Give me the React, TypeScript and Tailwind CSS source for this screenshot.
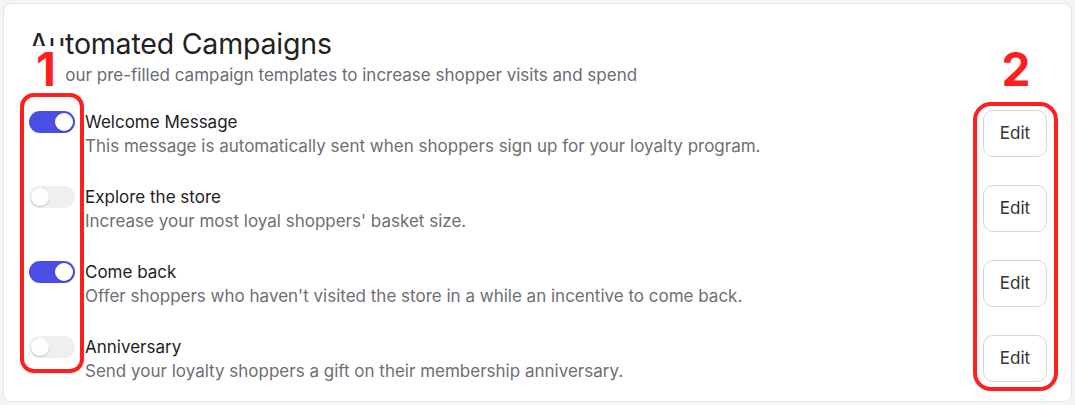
import React from "react";

type Campaign = { title: string; desc: string; on: boolean };

const campaigns: Campaign[] = [
    { title: "Welcome Message", desc: "This message is automatically sent when shoppers sign up for your loyalty program.", on: true },
    { title: "Explore the store", desc: "Increase your most loyal shoppers' basket size.", on: false },
    { title: "Come back", desc: "Offer shoppers who haven't visited the store in a while an incentive to come back.", on: true },
    { title: "Anniversary", desc: "Send your loyalty shoppers a gift on their membership anniversary.", on: false },
];

function Toggle({ on }: { on: boolean }) {
    const track = on ? "bg-[#4b4ee6] justify-end" : "bg-[#efefef] justify-start";
    return (
        <div className={"flex h-[22px] w-[46px] shrink-0 items-center rounded-full px-[2px] " + track}>
            <div className="h-[18px] w-[18px] rounded-full bg-white shadow-[0_1px_2px_rgba(0,0,0,0.2)]" />
        </div>
    );
}

export default function App() {
    return (
        <div className="min-h-screen bg-[#f4f4f5] p-[3px]" style={{ fontFamily: "Inter, 'Noto Sans', sans-serif" }}>
            <div className="relative h-[399px] rounded-lg border border-[#e6e6e6] bg-white pl-[25px] pr-[24px] pt-[21px]">
                <h2 className="text-[28.5px] leading-[38px] tracking-[-0.2px] text-[#222]">Automated Campaigns</h2>
                <p className="text-[17px] leading-[24px] text-[#6b6b72]">Use our pre-filled campaign templates to increase shopper visits and spend</p>

                <div className="mt-[23px] flex flex-col gap-[27px]">
                    {campaigns.map((c) => (
                        <div key={c.title} className="flex items-start justify-between">
                            <div className="flex items-start gap-[10px]">
                                <div className="flex h-[24px] items-center">
                                    <Toggle on={c.on} />
                                </div>
                                <div>
                                    <div className="text-[17px] leading-[24px] text-[#1d1d1f]">{c.title}</div>
                                    <div className="text-[17px] leading-[24px] text-[#6e6e73]">{c.desc}</div>
                                </div>
                            </div>
                            <button className="h-[47px] w-[64px] rounded-[10px] border border-[#d6d6d6] bg-white text-[17px] text-[#333]">Edit</button>
                        </div>
                    ))}
                </div>

                {/* annotations */}
                <div className="absolute left-[22px] top-[42px] w-[40px] bg-white text-center text-[46px] font-bold leading-[46px] text-[#ff1f1f]">1</div>
                <div className="absolute left-[994px] top-[42px] w-[36px] text-center text-[46px] font-bold leading-[46px] text-[#ff1f1f]">2</div>
                <div className="absolute left-[16px] top-[89px] h-[280px] w-[64px] rounded-[14px] border-[4px] border-[#ff1f1f]" />
                <div className="absolute left-[969px] top-[98px] h-[289px] w-[85px] rounded-[18px] border-[4px] border-[#ff1f1f]" />
            </div>
        </div>
    );
}
